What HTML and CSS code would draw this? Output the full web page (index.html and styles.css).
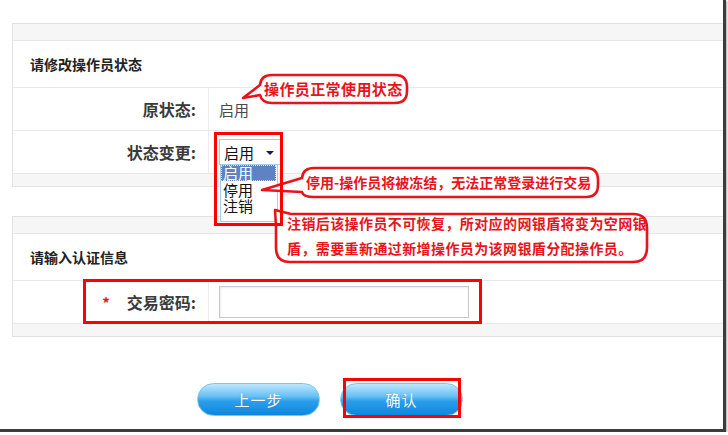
FILE: index.html
```html
<!DOCTYPE html>
<html lang="zh-CN">
<head>
<meta charset="utf-8">
<title>修改操作员状态</title>
<link rel="stylesheet" href="styles.css">
</head>
<body>
<div class="shot">
  <div class="page">
    <section class="panel">
      <div class="strip"></div>
      <div class="title">请修改操作员状态</div>
      <div class="row">
        <div class="label">原状态:</div>
        <div class="value plain">启用</div>
      </div>
      <div class="row">
        <div class="label">状态变更:</div>
        <div class="value">
          <div class="select">启用<span class="arrow"></span></div>
        </div>
      </div>
      <div class="strip foot"></div>
    </section>

    <section class="panel second">
      <div class="strip"></div>
      <div class="title">请输入认证信息</div>
      <div class="row">
        <div class="label"><span class="req">*</span>交易密码:</div>
        <div class="value"><div class="input"></div></div>
      </div>
      <div class="strip foot"></div>
    </section>

    <div class="buttons">
      <div class="btn">上一步</div>
      <div class="btn">确认</div>
    </div>
  </div>

  <ul class="dropdown">
    <li class="on">启用</li>
    <li>停用</li>
    <li>注销</li>
  </ul>

  <svg class="bubbles" width="728" height="435" viewBox="0 0 728 435">
    <path d="M272 75 H395 Q407 75 407 87 V91 Q407 103 395 103 H272 Q262 103 260 95 L243 98 L260 85 Q261 75 272 75 Z"/>
    <path d="M314 168 H586 Q598 168 598 180 V185 Q598 197 586 197 H314 Q303 197 302 192 L262 190 L302 178 Q303 168 314 168 Z"/>
    <path d="M275 210 L291 214 H633 Q647 214 647 228 V248 Q647 262 633 262 H290 Q276 262 276 248 V226 Z"/>
  </svg>

  <div class="note n1">操作员正常使用状态</div>
  <div class="note n2">停用-操作员将被冻结，无法正常登录进行交易</div>
  <div class="note n3">注销后该操作员不可恢复，所对应的网银盾将变为空网银<br>盾，需要重新通过新增操作员为该网银盾分配操作员。</div>

  <div class="mark m-select"></div>
  <div class="mark m-pass"></div>
  <div class="mark m-ok"></div>
</div>
</body>
</html>
```

FILE: styles.css
```css
html, body {
  margin: 0;
  padding: 0;
  background: #ffffff;
}

body {
  font-family: "Noto Sans CJK SC", "Noto Sans", sans-serif;
  color: #333333;
}

.shot {
  position: relative;
  width: 726px;
  height: 432px;
  box-sizing: border-box;
  border-right: 3px solid #3c3c3c;
  border-bottom: 3px solid #3c3c3c;
  box-shadow: 1px 1px 2px rgba(0, 0, 0, 0.35);
  overflow: hidden;
  background: #ffffff;
}

.page {
  padding: 23px 0 0 12px;
}

.panel {
  border: 1px solid #e2e2e2;
  border-right: none;
  margin-right: -4px;
}

.panel.second {
  margin-top: 29px;
}

.strip {
  height: 16px;
  background: #f6f6f6;
  border-bottom: 1px solid #e6e6e6;
}

.strip.foot {
  height: 12px;
  border-bottom: none;
}

.title {
  height: 46px;
  border-bottom: 1px solid #e8e8e8;
  display: flex;
  align-items: center;
  padding-left: 17px;
  font-size: 14px;
  font-weight: 700;
  color: #222222;
}

.row {
  height: 42px;
  border-bottom: 1px solid #e8e8e8;
  display: flex;
}

.label {
  width: 183px;
  padding-right: 12px;
  border-right: 1px solid #ececec;
  display: flex;
  align-items: center;
  justify-content: flex-end;
  font-size: 16px;
  font-weight: 700;
  color: #3a3a3a;
}

.req {
  color: #e8141c;
  font-weight: 700;
  font-size: 15px;
  margin-right: 17px;
}

.value {
  padding-left: 10px;
  display: flex;
  align-items: center;
}

.value.plain {
  font-size: 15px;
  color: #4a4a4a;
}

.select {
  width: 56px;
  height: 24px;
  border: 1px solid #a9cbe8;
  display: flex;
  align-items: center;
  padding-left: 4px;
  font-size: 15px;
  color: #111111;
  position: relative;
  background: #ffffff;
}

.arrow {
  position: absolute;
  right: 6px;
  top: 11px;
  width: 0;
  height: 0;
  border-left: 4px solid transparent;
  border-right: 4px solid transparent;
  border-top: 4px solid #12185a;
}

.input {
  width: 248px;
  height: 30px;
  border: 1px solid #c9c9c9;
  box-shadow: inset 1px 1px 2px rgba(0, 0, 0, 0.08);
  background: #ffffff;
}

.buttons {
  display: flex;
  gap: 20px;
  margin: 46px 0 0 185px;
}

.btn {
  width: 123px;
  height: 33px;
  border-radius: 17px;
  box-sizing: border-box;
  border: 1px solid #7cc4f0;
  background: linear-gradient(#bfe7fe 0%, #66c0f5 40%, #2b9fea 55%, #0c87df 100%);
  color: #ffffff;
  font-size: 15px;
  display: flex;
  align-items: center;
  justify-content: center;
  letter-spacing: 1px;
  text-shadow: 0 0 1px rgba(0, 60, 120, 0.3);
}

.dropdown {
  position: absolute;
  left: 220px;
  top: 165px;
  width: 56px;
  margin: 0;
  padding: 0 0 7px 0;
  list-style: none;
  background: #ffffff;
  border: 1px solid #a9cbe8;
  border-top: none;
  font-size: 15px;
  line-height: 16px;
  color: #111111;
}

.dropdown li {
  padding-left: 2px;
}

.dropdown li.on {
  background: #5f82c4;
  color: #ffffff;
  line-height: 14px;
  margin: 0 1px 1px 0;
  padding-left: 1px;
  border: 1px dotted #d6e0f2;
}

.bubbles {
  position: absolute;
  left: 0;
  top: 0;
  pointer-events: none;
}

.bubbles path {
  fill: #ffffff;
  stroke: #e8141c;
  stroke-width: 2.6;
  stroke-linejoin: round;
}

.note {
  position: absolute;
  color: #e8141c;
  font-weight: 700;
  white-space: nowrap;
}

.n1 {
  left: 264px;
  top: 79px;
  font-size: 15px;
  line-height: 20px;
  letter-spacing: 0.4px;
}

.n2 {
  left: 306px;
  top: 172px;
  font-size: 14px;
  line-height: 20px;
}

.n3 {
  left: 287px;
  top: 211px;
  font-size: 14px;
  line-height: 25px;
  letter-spacing: 0.4px;
}

.mark {
  position: absolute;
  box-sizing: border-box;
  border: 3px solid #ff0000;
}

.m-select {
  left: 214px;
  top: 132px;
  width: 69px;
  height: 94px;
}

.m-pass {
  left: 83px;
  top: 279px;
  width: 399px;
  height: 45px;
}

.m-ok {
  left: 343px;
  top: 378px;
  width: 118px;
  height: 40px;
}
```
